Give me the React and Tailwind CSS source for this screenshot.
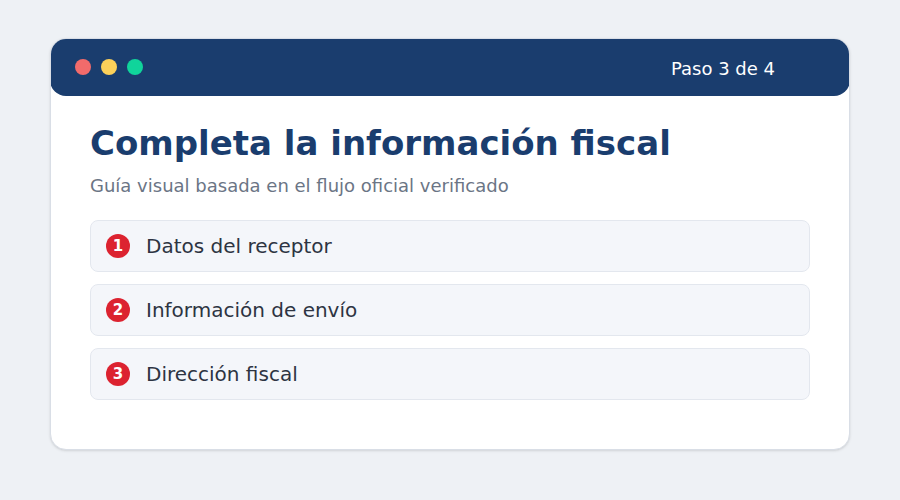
import React from "react";

const steps = ["Datos del receptor", "Información de envío", "Dirección fiscal"];

export default function App() {
  return (
    <div
      className="w-[900px] h-[500px] bg-[#eef1f5] pt-[38px] px-[50px]"
      style={{ fontFamily: '"DejaVu Sans", sans-serif' }}
    >
      <div className="h-[412px] bg-white rounded-2xl border border-[#d9dee6] shadow-sm overflow-hidden">
        <div className="h-[58px] bg-[#1a3d6e] rounded-2xl flex items-center justify-between pl-[25px] pr-[75px] -mx-px -mt-px">
          <div className="flex gap-[10px]">
            <span className="w-4 h-4 rounded-full bg-[#f26b6b]" />
            <span className="w-4 h-4 rounded-full bg-[#fcd15a]" />
            <span className="w-4 h-4 rounded-full bg-[#10d49b]" />
          </div>
          <span className="text-white text-[18px] mt-[3px]">Paso 3 de 4</span>
        </div>
        <div className="px-[39px] pt-[25px]">
          <h1 className="text-[34px] font-bold text-[#1a3d6e] leading-[44px]">
            Completa la información fiscal
          </h1>
          <p className="text-[18px] text-[#6b7585] mt-[9px] leading-[24px]">
            Guía visual basada en el flujo oficial verificado
          </p>
          <div className="mt-[22px] flex flex-col gap-3">
            {steps.map((s, i) => (
              <div
                key={s}
                className="h-[52px] bg-[#f4f6fa] border border-[#e3e7ee] rounded-lg flex items-center px-[15px] gap-[16px]"
              >
                <span className="w-[24px] h-[24px] rounded-full bg-[#dc2330] text-white text-[15px] font-bold flex items-center justify-center">
                  {i + 1}
                </span>
                <span className="text-[20px] text-[#2d3442]">{s}</span>
              </div>
            ))}
          </div>
        </div>
      </div>
    </div>
  );
}
